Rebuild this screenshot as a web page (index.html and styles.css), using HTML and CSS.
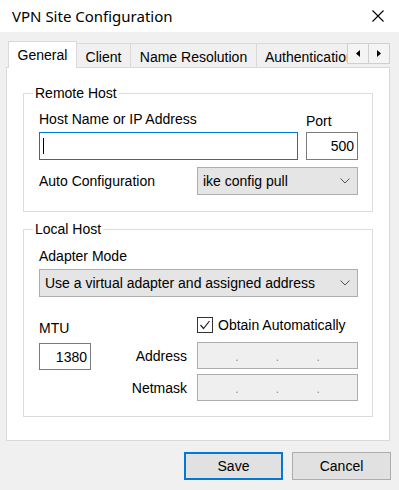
FILE: index.html
```html
<!DOCTYPE html>
<html lang="en">
    <head>
        <meta charset="UTF-8" />
        <title>VPN Site Configuration</title>
        <link rel="stylesheet" href="styles.css">
    </head>
    <body>
        <div class="titlebar">
            <span class="title">VPN Site Configuration</span>
            <svg class="close" width="12" height="12" viewBox="0 0 12 12">
                <path d="M0.5 0.5 L11.5 11.5 M11.5 0.5 L0.5 11.5" stroke="#000" stroke-width="1.1" fill="none" />
            </svg>
        </div>

        <div class="content">
            <div class="tabstrip">
                <div class="tabs">
                    <div class="tab active tab-general">General</div>
                    <div class="tab tab-client">Client</div>
                    <div class="tab tab-names">Name Resolution</div>
                    <div class="tab tab-auth">Authentication</div>
                </div>
                <div class="scroller">
                    <div class="arrow">
                        <svg width="4" height="7" viewBox="0 0 4 7"><polygon points="4,0 4,7 0,3.5" fill="#000" /></svg>
                    </div>
                    <div class="arrow">
                        <svg width="4" height="7" viewBox="0 0 4 7"><polygon points="0,0 0,7 4,3.5" fill="#000" /></svg>
                    </div>
                </div>
            </div>

            <div class="panel">
                <fieldset class="group remote">
                    <legend>Remote Host</legend>
                    <div class="host-row">
                        <div class="host-col">
                            <div class="label host-label">Host Name or IP Address</div>
                            <div class="textbox focused"><span class="caret"></span></div>
                        </div>
                        <div class="port-col">
                            <div class="label port-label">Port</div>
                            <div class="textbox number">500</div>
                        </div>
                    </div>
                    <div class="auto-row">
                        <div class="label">Auto Configuration</div>
                        <div class="select auto-select">
                            <span>ike config pull</span>
                            <svg width="10" height="6" viewBox="0 0 10 6"><polyline points="0.5,0.5 5,5 9.5,0.5" fill="none" stroke="#555" stroke-width="1" /></svg>
                        </div>
                    </div>
                </fieldset>

                <fieldset class="group local">
                    <legend>Local Host</legend>
                    <div class="label adapter-label">Adapter Mode</div>
                    <div class="select">
                        <span>Use a virtual adapter and assigned address</span>
                        <svg width="10" height="6" viewBox="0 0 10 6"><polyline points="0.5,0.5 5,5 9.5,0.5" fill="none" stroke="#555" stroke-width="1" /></svg>
                    </div>
                    <div class="local-grid">
                        <div class="label mtu-label">MTU</div>
                        <div class="check">
                            <span class="box">
                                <svg width="14" height="14" viewBox="0 0 14 14"><polyline points="2.5,7 5.5,10.5 11.5,3" fill="none" stroke="#222" stroke-width="1.2" /></svg>
                            </span>
                            <span>Obtain Automatically</span>
                        </div>
                        <div class="textbox number mtu">1380</div>
                        <div class="label side-label">Address</div>
                        <div class="ipbox"><span>.</span><span>.</span><span>.</span></div>
                        <div class="label side-label">Netmask</div>
                        <div class="ipbox"><span>.</span><span>.</span><span>.</span></div>
                    </div>
                </fieldset>
            </div>

            <div class="actions">
                <div class="btn default">Save</div>
                <div class="btn">Cancel</div>
            </div>
        </div>
    </body>
</html>
```

FILE: styles.css
```css
body {
    margin: 0;
    width: 399px;
    height: 490px;
    overflow: hidden;
    background-color: #f0f0f0;
    font-family: "Liberation Sans", Arial, sans-serif;
    font-size: 14px;
    line-height: 16px;
    color: #000;
}
.titlebar {
    height: 32px;
    box-sizing: border-box;
    padding: 0 15px 0 12px;
    background-color: #fff;
    display: flex;
    align-items: center;
    justify-content: space-between;
}
.title {
    font-family: "Noto Sans", sans-serif;
    font-size: 15px;
    line-height: 20px;
    color: #000;
}
.content {
    padding: 9px 9px 0 6px;
}

/* tabs */
.tabstrip {
    position: relative;
    z-index: 1;
    display: flex;
    height: 27px;
    margin-left: 2px;
}
.tabs {
    flex: 1;
    display: flex;
    align-items: flex-end;
    overflow: hidden;
}
.tab {
    flex-shrink: 0;
    box-sizing: border-box;
    height: 24px;
    margin-bottom: 1px;
    margin-left: -1px;
    padding-top: 5px;
    border: 1px solid #d9d9d9;
    border-bottom: none;
    background-color: #f0f0f0;
    text-align: center;
    white-space: nowrap;
}
.tab.active {
    height: 27px;
    margin-bottom: 0;
    margin-left: 0;
    padding-top: 5px;
    background-color: #fff;
}
.tab-general {
    width: 69px;
}
.tab-client {
    width: 55px;
}
.tab-names {
    width: 127px;
}
.tab-auth {
    padding-left: 8px;
    padding-right: 8px;
}
.scroller {
    display: flex;
    margin-top: 2px;
    height: 21px;
}
.arrow {
    box-sizing: border-box;
    width: 22px;
    height: 21px;
    border: 1px solid #cfcfcf;
    background-color: #f4f4f4;
    display: flex;
    align-items: center;
    justify-content: center;
}
.arrow + .arrow {
    margin-left: -1px;
}

/* panel */
.panel {
    margin-top: -1px;
    padding: 17px 16px 23px 16px;
    background-color: #fff;
    border: 1px solid #d9d9d9;
}
.group {
    margin: 0;
    min-width: 0;
    padding: 0 14px 16px 15px;
    border: 1px solid #dcdcdc;
}
.group legend {
    padding: 0 2px;
    margin-left: -6px;
    line-height: 16px;
}
.local {
    margin-top: 9px;
    padding-bottom: 15px;
}
.label {
    white-space: nowrap;
}
.host-row {
    display: flex;
    align-items: flex-end;
    gap: 8px;
    margin-top: 10px;
}
.host-col {
    width: 259px;
}
.port-col {
    flex: 1;
}
.host-label {
    margin-bottom: 5px;
}
.port-label {
    margin-bottom: 3px;
}
.textbox {
    box-sizing: border-box;
    height: 28px;
    border: 1px solid #7a7a7a;
    background-color: #fff;
    display: flex;
    align-items: center;
}
.textbox.focused {
    border-color: #0078d7;
    padding-left: 3px;
}
.caret {
    width: 1px;
    height: 16px;
    background-color: #000;
}
.textbox.number {
    justify-content: flex-end;
    padding-right: 3px;
}
.auto-row {
    display: flex;
    align-items: center;
    margin-top: 7px;
}
.select {
    box-sizing: border-box;
    height: 28px;
    padding: 0 7px 0 5px;
    border: 1px solid #adadad;
    background-color: #e5e5e5;
    display: flex;
    align-items: center;
    justify-content: space-between;
    white-space: nowrap;
}
.auto-select {
    width: 161px;
    margin-left: auto;
}
.adapter-label {
    margin-top: 11px;
    margin-bottom: 5px;
}
.local-grid {
    display: grid;
    grid-template-columns: 52px 1fr 161px;
    grid-template-rows: 20px 27px 27px;
    row-gap: 5px;
    margin-top: 20px;
}
.mtu-label {
    grid-column: 1 / 3;
    align-self: center;
    margin-top: 2px;
}
.check {
    grid-column: 3;
    display: flex;
    align-items: flex-start;
    gap: 5px;
}
.check .box {
    box-sizing: border-box;
    width: 16px;
    height: 16px;
    border: 1px solid #333;
    background-color: #fff;
    display: flex;
}
.mtu {
    grid-column: 1;
    height: 27px;
    margin-top: 1px;
}
.side-label {
    grid-column: 2;
    align-self: center;
    text-align: right;
    padding-right: 10px;
}
.ipbox {
    grid-column: 3;
    box-sizing: border-box;
    height: 27px;
    border: 1px solid #adadad;
    background-color: #efefef;
    display: flex;
    justify-content: space-evenly;
    align-items: center;
    color: #8a8a8a;
    font-size: 12px;
    padding-top: 2px;
}

/* buttons */
.actions {
    display: flex;
    justify-content: flex-end;
    gap: 9px;
    margin-top: 11px;
    margin-right: -1px;
}
.btn {
    box-sizing: border-box;
    width: 99px;
    height: 28px;
    border: 1px solid #adadad;
    background-color: #e1e1e1;
    display: flex;
    align-items: center;
    justify-content: center;
}
.btn.default {
    border: 2px solid #0078d7;
}
```
